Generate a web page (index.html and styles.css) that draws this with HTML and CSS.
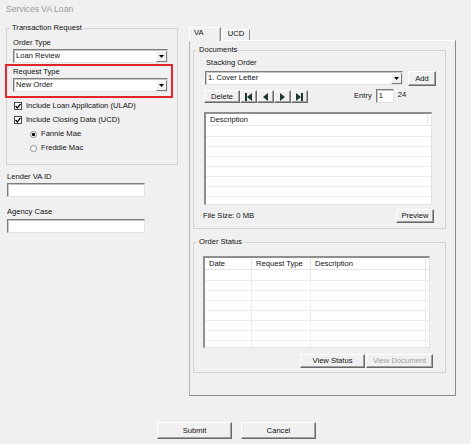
FILE: index.html
```html
<!DOCTYPE html>
<html>
<head>
<meta charset="utf-8">
<title>Services VA Loan</title>
<link rel="stylesheet" href="styles.css">
</head>
<body>
<div class="title">Services VA Loan</div>
<div class="main">
  <div class="left">
    <fieldset class="group trans">
      <legend>Transaction Request</legend>
      <div class="lbl first">Order Type</div>
      <div class="combo c1"><span class="val">Loan Review</span><span class="drop"><svg width="5" height="3" viewBox="0 0 5 3"><path d="M0 0H5L2.5 3Z" fill="#000"/></svg></span></div>
      <div class="highlight">
        <div class="lbl">Request Type</div>
        <div class="combo c2"><span class="val">New Order</span><span class="drop"><svg width="5" height="3" viewBox="0 0 5 3"><path d="M0 0H5L2.5 3Z" fill="#000"/></svg></span></div>
      </div>
      <div class="check firstcheck"><span class="cb"><svg width="6" height="6" viewBox="0 0 6 6"><path d="M0.5 3L2.3 4.9L5.5 0.8" stroke="#000" stroke-width="1.3" fill="none"/></svg></span>Include Loan Application (ULAD)</div>
      <div class="check"><span class="cb"><svg width="6" height="6" viewBox="0 0 6 6"><path d="M0.5 3L2.3 4.9L5.5 0.8" stroke="#000" stroke-width="1.3" fill="none"/></svg></span>Include Closing Data (UCD)</div>
      <div class="radio"><span class="rb on"></span>Fannie Mae</div>
      <div class="radio"><span class="rb"></span>Freddie Mac</div>
    </fieldset>
    <div class="lbl flbl1">Lender VA ID</div>
    <div class="textbox tb1"></div>
    <div class="lbl flbl2">Agency Case</div>
    <div class="textbox tb2"></div>
  </div>

  <div class="tabs">
    <div class="tabstrip">
      <div class="tab active">VA</div>
      <div class="tab">UCD</div>
    </div>
    <div class="panel">
      <fieldset class="group docs">
        <legend>Documents</legend>
        <div class="lbl stack-lbl">Stacking Order</div>
        <div class="row1">
          <div class="combo c3"><span class="val">1. Cover Letter</span><span class="drop"><svg width="5" height="3" viewBox="0 0 5 3"><path d="M0 0H5L2.5 3Z" fill="#000"/></svg></span></div>
          <button class="btn add">Add</button>
        </div>
        <div class="row2">
          <button class="btn del">Delete</button>
          <button class="btn nav"><svg width="7" height="8" viewBox="0 0 7 8"><rect x="0" y="0" width="2" height="8" fill="#1c3636"/><path d="M7 0V8L2 4Z" fill="#1c3636"/></svg></button>
          <button class="btn nav"><svg width="5" height="8" viewBox="0 0 5 8"><path d="M5 0V8L0 4Z" fill="#1c3636"/></svg></button>
          <button class="btn nav"><svg width="5" height="8" viewBox="0 0 5 8"><path d="M0 0V8L5 4Z" fill="#1c3636"/></svg></button>
          <button class="btn nav"><svg width="7" height="8" viewBox="0 0 7 8"><path d="M0 0V8L5 4Z" fill="#1c3636"/><rect x="5" y="0" width="2" height="8" fill="#1c3636"/></svg></button>
          <span class="entry-lbl">Entry</span>
          <div class="textbox entry">1</div>
          <span class="count">24</span>
        </div>
        <div class="list dlist">
          <div class="lhead"><div class="hc dcol">Description</div><div class="hc rest"></div></div>
          <div class="lbody"><div class="bc dcol"></div></div>
        </div>
        <div class="filerow">
          <span>File Size: 0 MB</span>
          <button class="btn preview">Preview</button>
        </div>
      </fieldset>

      <fieldset class="group orders">
        <legend>Order Status</legend>
        <div class="list olist">
          <div class="lhead">
            <div class="hc ocol1">Date</div>
            <div class="hc ocol2">Request Type</div>
            <div class="hc ocol3">Description</div>
            <div class="hc rest"></div>
          </div>
          <div class="lbody">
            <div class="bc ocol1"></div>
            <div class="bc ocol2"></div>
            <div class="bc ocol3"></div>
          </div>
        </div>
        <div class="obtns">
          <button class="btn vs">View Status</button>
          <button class="btn vd">View Document</button>
        </div>
      </fieldset>
    </div>
  </div>
</div>
<div class="footer">
  <button class="btn foot">Submit</button>
  <button class="btn foot">Cancel</button>
</div>
</body>
</html>
```

FILE: styles.css
```css
* { box-sizing: border-box; }
html, body { margin: 0; padding: 0; }
body {
  width: 471px;
  height: 444px;
  overflow: hidden;
  background: #f0f0f0;
  font-family: "Liberation Sans", Arial, sans-serif;
  font-size: 7.6px;
  line-height: 10px;
  color: #111;
}
.title {
  height: 20px;
  line-height: 18px;
  padding-left: 6px;
  font-size: 8.6px;
  color: #9a9a9a;
}
.main { display: flex; height: 376px; }
.left { width: 178px; padding-left: 6px; flex: none; }

.group {
  margin: 0;
  padding: 0;
  min-width: 0;
  border: 1px solid #d2d2d2;
}
.group legend {
  padding: 0 2px;
  margin-left: 3px;
  height: 10px;
  line-height: 10px;
}
.lbl { height: 10px; line-height: 10px; white-space: nowrap; }

.trans { margin-top: 3px; width: 172px; padding-bottom: 9px; }
.trans .lbl.first { margin: 5px 0 0 6px; }

.combo {
  display: flex;
  align-items: center;
  height: 14px;
  background: #fff;
  border: 1px solid;
  border-color: #7c7c7c #e3e3e3 #e3e3e3 #7c7c7c;
  box-shadow: inset 1px 1px 0 #c6c6c6;
  padding: 0 0 0 2px;
}
.combo .val { flex: 1; white-space: nowrap; }
.drop {
  width: 11px;
  height: 11px;
  display: flex;
  align-items: center;
  justify-content: center;
  background: #f0f0f0;
  border: 1px solid;
  border-color: #fff #7a7a7a #7a7a7a #fff;
}
.c1 { width: 155px; margin: 1px 0 0 6px; }
.highlight {
  margin: 1px 0 0 -2px;
  width: 168px;
  border: 2px solid #e3262b;
  padding: 1px 0 4px 6px;
}
.c2 { width: 155px; margin-top: 1px; }

.check, .radio {
  display: flex;
  align-items: center;
  height: 14px;
  white-space: nowrap;
}
.check { padding-left: 7px; }
.firstcheck { margin-top: 1px; }
.cb {
  width: 8px;
  height: 8px;
  border: 1px solid #4a4a4a;
  background: #fff;
  margin-right: 4px;
  display: flex;
  align-items: center;
  justify-content: center;
}
.radio { padding-left: 23px; }
.rb {
  width: 7px;
  height: 7px;
  border-radius: 50%;
  border: 1px solid #8a8a8a;
  background: #fff;
  margin-right: 4px;
}
.rb.on { background: radial-gradient(circle, #000 0 1.3px, #fff 1.8px); }

.textbox {
  height: 14px;
  background: #fff;
  border: 1px solid;
  border-color: #7c7c7c #e3e3e3 #e3e3e3 #7c7c7c;
  box-shadow: inset 1px 1px 0 #c6c6c6;
  padding-left: 2px;
  line-height: 12px;
}
.flbl1 { margin: 7px 0 0 1px; }
.tb1 { width: 138px; margin: 1px 0 0 1px; }
.flbl2 { margin: 10px 0 0 1px; }
.tb2 { width: 138px; margin: 2px 0 0 1px; }

.tabs { margin: 7px 0 0 11px; width: 267px; flex: none; }
.tabstrip { display: flex; align-items: flex-end; height: 13px; position: relative; z-index: 1; }
.tab {
  height: 11px;
  line-height: 8px;
  border: 1px solid;
  border-bottom: none;
  border-color: #fff #8a8a8a #fff #fff;
  background: #f0f0f0;
  width: 28px;
  margin-left: 1px;
  text-align: center;
}
.tab.active {
  height: 14px;
  margin-bottom: -1px;
  width: 32px;
  margin-left: 0;
  line-height: 10px;
  text-align: left;
  padding-left: 4px;
  box-shadow: inset -1px 0 0 #c8c8c8;
}
.panel {
  height: 356px;
  border: 1px solid;
  border-color: #fff #8a8a8a #8a8a8a #b4b4b4;
  padding-left: 3px;
}

.docs { margin-top: 4px; width: 253px; padding-bottom: 5px; }
.stack-lbl { margin: 3px 0 0 12px; }
.row1 { display: flex; margin-top: 3px; height: 15px; padding-left: 11px; }
.c3 { width: 198px; }
.btn {
  display: flex;
  align-items: center;
  justify-content: center;
  margin: 0;
  padding: 0;
  font: inherit;
  color: #111;
  background: #f0f0f0;
  border: 1px solid;
  border-color: #fff #696969 #696969 #fff;
  box-shadow: inset -1px -1px 0 #a0a0a0;
  white-space: nowrap;
}
.add { width: 28px; height: 15px; margin-left: 5px; }
.row2 { display: flex; align-items: flex-start; margin-top: 3px; height: 14px; padding-left: 10px; }
.del { width: 36px; height: 13px; margin-top: 1px; }
.nav { width: 17px; height: 13px; margin-top: 1px; }
.entry-lbl { margin-left: 46px; line-height: 14px; }
.entry { width: 18px; margin-left: 4px; }
.count { margin-left: 4px; line-height: 12px; }

.list {
  background: #fff;
  border-style: solid;
  border-width: 2px 1px 1px 2px;
  border-color: #8f8f8f #e3e3e3 #e3e3e3 #8f8f8f;
  display: flex;
  flex-direction: column;
  overflow: hidden;
}
.lhead { display: flex; height: 12px; border-bottom: 1px solid #e5e5e5; flex: none; }
.hc { border-right: 1px solid #e5e5e5; padding-left: 4px; line-height: 11px; flex: none; white-space: nowrap; }
.hc.rest { flex: 1; border-right: none; }
.lbody {
  flex: 1;
  display: flex;
  background: repeating-linear-gradient(to bottom, #fff 0 9px, #ececec 9px 10px);
  background-position: 0 1px;
}
.bc { border-right: 1px solid #ececec; flex: none; }
.dlist { margin: 9px 0 0 10px; width: 228px; height: 93px; }
.dcol { width: 222px; }
.dlist .bc { border-right: none; }
.filerow {
  display: flex;
  justify-content: space-between;
  align-items: center;
  margin-top: 4px;
  height: 14px;
  padding: 0 11px 0 9px;
}
.preview { width: 38px; height: 14px; }

.orders { margin-top: 8px; width: 253px; padding-bottom: 4px; }
.olist { margin: 9px 0 0 9px; width: 227px; height: 92px; }
.ocol1 { width: 47px; }
.ocol2 { width: 59px; }
.ocol3 { width: 115px; }
.obtns { display: flex; justify-content: flex-end; gap: 1px; margin-top: 6px; padding-right: 12px; }
.vs { width: 65px; height: 14px; }
.vd { width: 67px; height: 14px; color: #a0a0a0; }

.footer { display: flex; gap: 9px; padding-left: 157px; margin-top: 26px; }
.foot { width: 75px; height: 17px; }
```
